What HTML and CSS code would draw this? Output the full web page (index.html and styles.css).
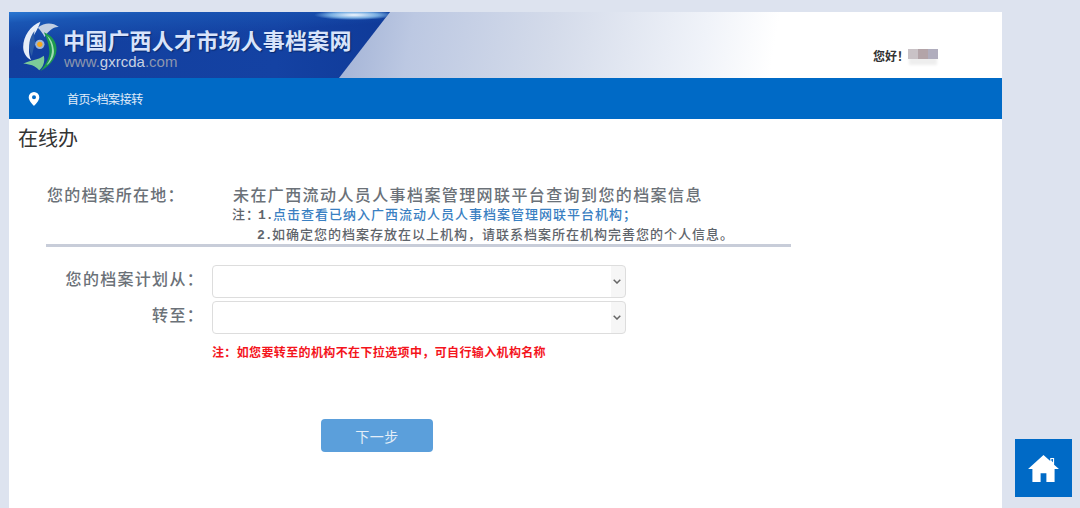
FILE: index.html
```html
<!DOCTYPE html>
<html lang="zh-CN">
<head>
  <meta charset="UTF-8" />
  <title>在线办</title>
  <link rel="stylesheet" href="styles.css">
</head>
<body>

  <div class="wrap">
    <div class="header">
      <div class="banner">
        <svg class="logo" viewBox="0 0 107 150" width="36" height="50">
          <path d="M52 2C22 14 0 45 0 78c0 17 8 30 24 40-10-20-8-46 2-64C34 38 46 20 52 2z" fill="#e6edf8"/>
          <path d="M34 30C18 50 12 78 26 106c4-18 6-30 12-40-6-10-6-24-4-36z" fill="#2d5ca6"/>
          <path d="M44 20C64 4 88 4 107 18 90 16 76 30 64 48c-4-10-12-20-20-28z" fill="#c2cee2"/>
          <path d="M62 34c22 8 40 28 38 54-2 28-24 50-48 62 18-22 30-44 26-66-2-18-8-34-16-50z" fill="#1d9a4e"/>
          <path d="M72 44c8 16 16 30 14 50-2 16-8 28-16 38l4-2c14-14 20-30 18-44-2-18-8-32-20-42z" fill="#9fdcb4"/>
          <path d="M0 128c22-12 44-10 62-24 4 18-2 34-14 44-10-14-30-20-48-20z" fill="#7ccb98"/>
          <circle cx="50" cy="70" r="14" fill="#9db5d8"/>
          <circle cx="50" cy="70" r="8" fill="#f4a71e"/>
        </svg>
        <div class="brand">
          <div class="brand-name">中国广西人才市场人事档案网</div>
          <div class="brand-url">www.<span>gxrcda</span>.com</div>
        </div>
      </div>
      <div class="greet">您好！<span class="blur-name"></span></div>
    </div>

    <div class="nav">
      <svg class="pin" viewBox="0 0 12 14" width="12" height="14">
        <path d="M6 0a5.300 5.300 0 0 0-5.300 5.300C.7 9 6 14 6 14s5.300-5 5.300-8.700A5.300 5.300 0 0 0 6 0zm0 7.200a2 2 0 1 1 0-4 2 2 0 0 1 0 4z" fill="#fff"/>
      </svg>
      <span class="crumb">首页&gt;档案接转</span>
    </div>

    <div class="page-title">在线办</div>

    <div class="info">
      <div class="info-label">您的档案所在地：</div>
      <div class="info-body">
        <div class="info-main">未在广西流动人员人事档案管理网联平台查询到您的档案信息</div>
        <div class="note">注：<span class="num">1.</span><a href="#">点击查看已纳入广西流动人员人事档案管理网联平台机构；</a></div>
        <div class="note note-second"><span class="num">2.</span>如确定您的档案存放在以上机构，请联系档案所在机构完善您的个人信息。</div>
      </div>
    </div>
    <div class="rule"></div>

    <div class="form-row">
      <label>您的档案计划从：</label>
      <select></select>
    </div>
    <div class="form-row">
      <label>转至：</label>
      <select></select>
    </div>
    <div class="warn">注：如您要转至的机构不在下拉选项中，可自行输入机构名称</div>

    <div class="actions">
      <button class="btn">下一步</button>
    </div>
  </div>

  <!-- back to home -->
  <a class="home-btn" href="#" aria-label="首页">
    <svg viewBox="0 0 32 28" width="31" height="27">
      <path d="M16 0 0 14.500h4.500V28h8.500v-9h6v9h8.500V14.500H32l-5-4.500V3h-4v3.300z" fill="#fff"/>
      <path d="M24.200 4.200h1.600v3.200l-1.600-1.400z" fill="#006ac6"/>
    </svg>
  </a>

</body>
</html>
```

FILE: styles.css
```css
html, body {
  height: 100%;
}

body {
  margin: 0;
  background: #dde3ef;
  font-family: "Liberation Serif", "Noto Sans CJK SC", serif;
  color: #333;
  overflow: hidden;
}

.wrap {
  width: 993px;
  height: 496px;
  margin: 12px 0 0 9px;
  background: #fff;
}

.header {
  height: 66px;
  display: flex;
  justify-content: space-between;
  background: linear-gradient(100deg, #a3b3d6 330px, #bcc8e2 400px, #d4dbea 540px, #f0f3f9 690px, #fff 760px);
}

.banner {
  width: 381px;
  height: 66px;
  padding: 9px 0 0 14px;
  box-sizing: border-box;
  display: flex;
  background:
    radial-gradient(ellipse 40px 5px at 345px 3px, #f2f8ff, rgba(160, 215, 250, 0.7) 60%, transparent),
    linear-gradient(176deg, #2a78d2 0, #1a56b4 12%, transparent 40%),
    linear-gradient(90deg, #123f9e, #1442a3 70%, #0f3a98);
  clip-path: polygon(0 0, 100% 0, 330px 100%, 0 100%);
}

.logo {
  flex: none;
}

.brand {
  margin: 0 0 0 4px;
  font-family: "Noto Sans CJK SC", sans-serif;
}

.brand-name {
  margin-top: 6px;
  font-size: 22px;
  line-height: 24px;
  font-weight: 700;
  letter-spacing: 0.2px;
  white-space: nowrap;
  color: #d8e4fb;
  text-shadow: 1px 1px 1px #0a2a6e;
}

.brand-url {
  margin: 4px 0 0 1px;
  font-family: "Liberation Sans", sans-serif;
  font-size: 15px;
  line-height: 14px;
  color: #8d97ae;
}

.brand-url span {
  color: #c9d2e2;
}

.greet {
  margin: 35px 64px 0 0;
  font-family: "Noto Sans CJK SC", sans-serif;
  font-size: 12px;
  line-height: 17px;
  font-weight: 700;
  color: #333;
  display: flex;
  align-items: flex-start;
}

.blur-name {
  width: 30px;
  height: 10px;
  margin: 2px 0 0 -1px;
  background: linear-gradient(90deg, #c9c2c6 33%, #b3a4a8 33% 66%, #b0adbd 66%);
  box-shadow: 0 7px 3px -1px #eee;
}

.nav {
  height: 41px;
  background: #006ac6;
  display: flex;
  align-items: center;
  padding-left: 19px;
}

.crumb {
  margin-left: 27px;
  font-family: "Noto Sans CJK SC", sans-serif;
  font-size: 12px;
  letter-spacing: -0.4px;
  color: #e0ecf8;
}

.page-title {
  margin: 6px 0 0 9px;
  font-size: 20px;
  line-height: 25px;
  font-family: "Noto Sans CJK SC", serif;
  color: #333;
}

.info {
  display: flex;
  margin: 35px 0 0 38px;
  color: #6b7178;
}

.info-label {
  width: 186px;
  flex: none;
  font-size: 16px;
  line-height: 22px;
  font-weight: 500;
  letter-spacing: 1.2px;
}

.info-main {
  font-size: 16px;
  line-height: 22px;
  letter-spacing: 1.4px;
  font-weight: 500;
}

.note {
  margin-left: -1px;
  font-size: 13px;
  line-height: 19px;
  font-weight: 500;
  letter-spacing: 1px;
  color: #5f656c;
}

.info-main + .note {
  margin-top: -2px;
}

.num {
  display: inline-block;
  width: 15px;
  margin-left: -2px;
  font-family: "Liberation Mono", monospace;
  font-weight: 700;
  letter-spacing: 0;
}

.note a {
  color: #3a80c2;
  text-decoration: none;
}

.note-second {
  margin-left: 26px;
}

.rule {
  width: 745px;
  height: 3px;
  margin: -1px 0 0 37px;
  background: #c8cdd9;
}

.form-row {
  display: flex;
  margin-top: 3px;
}

.rule + .form-row {
  margin-top: 18px;
}

.form-row label {
  width: 203px;
  padding-right: 8px;
  box-sizing: border-box;
  text-align: right;
  font-size: 16px;
  line-height: 30px;
  font-weight: 500;
  letter-spacing: 1.3px;
  color: #6b7178;
}

.form-row select {
  width: 414px;
  height: 33px;
  appearance: none;
  -webkit-appearance: none;
  background:
    url("data:image/svg+xml,%3Csvg xmlns='http://www.w3.org/2000/svg' width='8' height='5'%3E%3Cpath d='M.7.7 4 4 7.300.7' fill='none' stroke='%23666' stroke-width='1.500'/%3E%3C/svg%3E") no-repeat right 4px center,
    linear-gradient(90deg, #fff 398px, #f6f6f6 398px);
  border: 1px solid #ddd;
  border-radius: 4px;
  font-size: 14px;
  color: #555;
}

.warn {
  margin: 11px 0 0 203px;
  font-size: 12px;
  line-height: 16px;
  font-weight: 700;
  letter-spacing: 0.37px;
  color: #f4141c;
}

.actions {
  margin: 58px 0 0 312px;
}

.btn {
  width: 112px;
  height: 33px;
  background-color: #5b9fdb;
  border: none;
  border-radius: 4px;
  font-family: "Noto Sans CJK SC", sans-serif;
  font-size: 14px;
  letter-spacing: 0.5px;
  color: #e4eef8;
  cursor: pointer;
}

.home-btn {
  position: fixed;
  left: 1015px;
  top: 439px;
  width: 57px;
  height: 58px;
  background: #006ac6;
  display: flex;
  align-items: center;
  justify-content: center;
}
```
